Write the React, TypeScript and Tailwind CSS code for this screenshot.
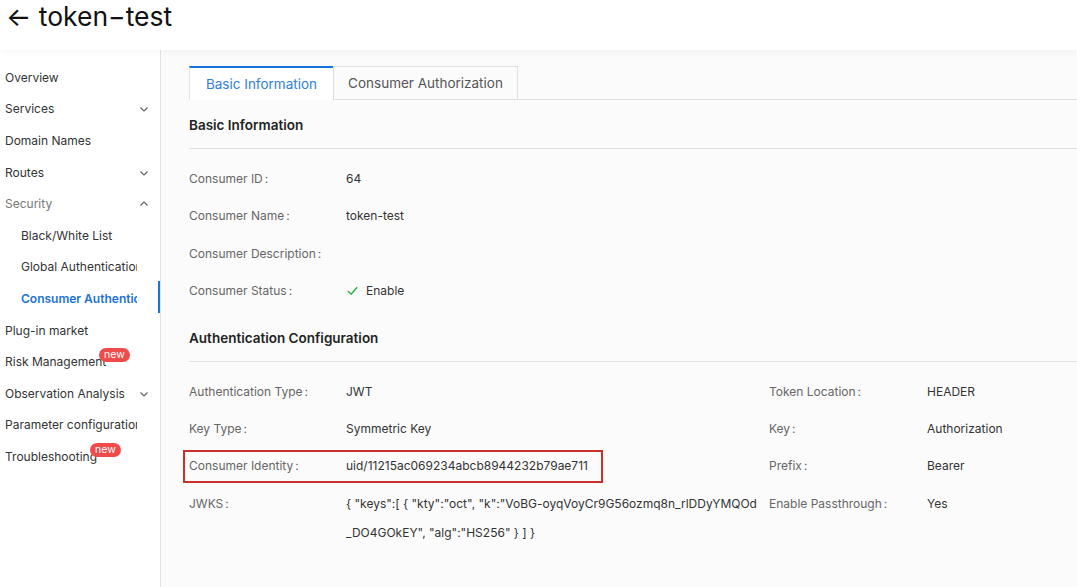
import React from "react";

interface NavItem {
  label: string;
  sub?: boolean;
  active?: boolean;
  muted?: boolean;
  caret?: "down" | "up";
  badge?: boolean;
}

const navItems: NavItem[] = [
  { label: "Overview" },
  { label: "Services", caret: "down" },
  { label: "Domain Names" },
  { label: "Routes", caret: "down" },
  { label: "Security", caret: "up", muted: true },
  { label: "Black/White List", sub: true },
  { label: "Global Authentication", sub: true },
  { label: "Consumer Authentication", sub: true, active: true },
  { label: "Plug-in market" },
  { label: "Risk Management", badge: true },
  { label: "Observation Analysis", caret: "down" },
  { label: "Parameter configuration" },
  { label: "Troubleshooting", badge: true },
];

const Caret: React.FC<{ dir: "down" | "up" }> = ({ dir }) => (
  <svg
    width="10"
    height="10"
    viewBox="0 0 10 10"
    className="absolute right-[11px] top-1/2 -translate-y-1/2 text-[#666]"
  >
    <path
      d={dir === "down" ? "M1.5 3.5 L5 7 L8.5 3.5" : "M1.5 6.5 L5 3 L8.5 6.5"}
      fill="none"
      stroke="currentColor"
      strokeWidth="1.2"
    />
  </svg>
);

const Sidebar: React.FC = () => (
  <div className="w-[161px] shrink-0 border-r border-[#e3e3e3] bg-white pt-[12px]">
    {navItems.map((item) => (
      <div
        key={item.label}
        className={
          "relative flex h-[31.6px] items-center text-[12px] " +
          (item.sub ? "pl-[21px] " : "pl-[5px] ") +
          (item.active
            ? "font-semibold text-[#1a73d9] "
            : item.muted
              ? "text-[#777] "
              : "text-[#333] ")
        }
      >
        <span
          className={
            "block overflow-hidden whitespace-nowrap " +
            (item.sub ? "w-[116px]" : "w-[132px]")
          }
        >
          {item.label}
        </span>
        {item.caret && <Caret dir={item.caret} />}
        {item.active && (
          <span className="absolute right-0 top-[-2px] h-[32px] w-[2.5px] bg-[#1a73d9]" />
        )}
        {item.badge && (
          <span
            className={
              "absolute top-[2px] rounded-full bg-[#f04b4b] px-[5px] text-[10.5px] leading-[14px] text-white " +
              (item.label === "Troubleshooting" ? "left-[90px]" : "left-[99px]")
            }
          >
            new
          </span>
        )}
      </div>
    ))}
  </div>
);

const Label: React.FC<{ text: string; w: string }> = ({ text, w }) => (
  <span className={"shrink-0 text-[#666] " + w}>
    {text}
    <span className="ml-[2px]">:</span>
  </span>
);

const Row: React.FC<{
  label: string;
  value?: React.ReactNode;
  label2?: string;
  value2?: string;
}> = ({ label, value, label2, value2 }) => (
  <div className="flex h-[37.4px] text-[12px] leading-[37.4px]">
    <div className="flex w-[580px] items-start">
      <Label text={label} w="w-[157px]" />
      <span className="text-[#333]">{value}</span>
    </div>
    {label2 && (
      <div className="flex items-start">
        <Label text={label2} w="w-[158px]" />
        <span className="text-[#333]">{value2}</span>
      </div>
    )}
  </div>
);

export default function App() {
  return (
    <div
      className="flex h-[587px] w-[1077px] flex-col overflow-hidden bg-white"
      style={{ fontFamily: "Inter, 'Noto Sans', sans-serif" }}
    >
      <div className="relative z-10 flex h-[50px] shrink-0 items-start bg-white pl-[6px] shadow-[0_2px_6px_rgba(0,0,0,0.04)]">
        <span className="mt-[-2px] text-[26.5px] leading-[36px] text-[#111]">
          ← token−test
        </span>
      </div>
      <div className="flex flex-1">
        <Sidebar />
        <div className="flex-1 bg-[#fbfbfb] pl-[28px] pt-[16px]">
          <div className="flex h-[34px] items-stretch">
            <div className="flex w-[144px] items-center justify-center border-t-2 border-l border-[#1a73d9] border-l-[#e3e3e3] bg-white text-[13.5px] text-[#2f7fd9]">
              Basic Information
            </div>
            <div className="flex w-[185px] items-center justify-center border border-[#e0e0e0] bg-[#fbfbfb] text-[13.5px] text-[#555]">
              Consumer Authorization
            </div>
            <div className="flex-1 border-b border-[#e0e0e0]" />
          </div>

          <div className="pt-[15px] text-[13.5px] leading-[20px] font-semibold text-[#222]">
            Basic Information
          </div>
          <div className="mt-[13px] h-px bg-[#e0e0e0]" />

          <div className="flex flex-col pt-[11px]">
            <Row label="Consumer ID" value="64" />
            <Row label="Consumer Name" value="token-test" />
            <Row label="Consumer Description" value="" />
            <Row
              label="Consumer Status"
              value={
                <span className="flex h-[37.4px] items-center gap-[7px]">
                  <svg width="13" height="13" viewBox="0 0 14 14">
                    <path
                      d="M2 7.5 L5.5 11 L12 3.5"
                      fill="none"
                      stroke="#2cb34a"
                      strokeWidth="1.6"
                    />
                  </svg>
                  Enable
                </span>
              }
            />
          </div>

          <div className="pt-[18px] text-[13.5px] leading-[20px] font-semibold text-[#222]">
            Authentication Configuration
          </div>
          <div className="mt-[13px] h-px bg-[#e0e0e0]" />

          <div className="flex flex-col pt-[11px]">
            <Row
              label="Authentication Type"
              value="JWT"
              label2="Token Location"
              value2="HEADER"
            />
            <Row
              label="Key Type"
              value="Symmetric Key"
              label2="Key"
              value2="Authorization"
            />
            <div className="relative">
              <Row
                label="Consumer Identity"
                value="uid/11215ac069234abcb8944232b79ae711"
                label2="Prefix"
                value2="Bearer"
              />
              <div className="absolute left-[-6px] top-[3px] h-[33px] w-[420px] border-2 border-[#c8312b]" />
            </div>
            <Row
              label="JWKS"
              value={
                <span className="mt-[4px] block whitespace-nowrap leading-[29px]">
                  {'{ "keys":[ { "kty":"oct", "k":"VoBG-oyqVoyCr9G56ozmq8n_rlDDyYMQOd'}
                  <br />
                  {'_DO4GOkEY", "alg":"HS256" } ] }'}
                </span>
              }
              label2="Enable Passthrough"
              value2="Yes"
            />
          </div>
        </div>
      </div>
    </div>
  );
}
